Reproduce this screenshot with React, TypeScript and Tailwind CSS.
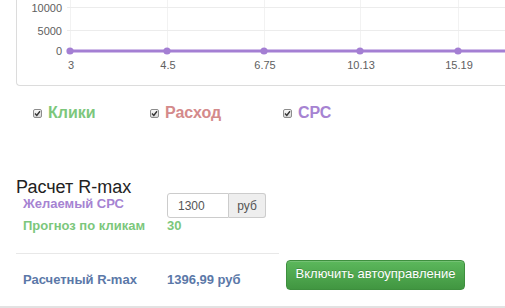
import type { ReactNode } from 'react';

const FONT = '[font-family:"Liberation_Sans",Arial,sans-serif]';

// x positions of the data points, relative to the chart svg
const POINTS = [
  { x: 53, label: '3' },
  { x: 150, label: '4.5' },
  { x: 247, label: '6.75' },
  { x: 343, label: '10.13' },
  { x: 441, label: '15.19' },
];

const Y_TICKS = [
  { y: 7.5, label: '10000' },
  { y: 30.5, label: '5000' },
  { y: 51, label: '0' },
];

function Chart() {
  return (
    <div className="ml-[16px] h-[86px] w-[520px] shrink-0 border-b border-l border-[#dcdcdc] rounded-bl-[4px]">
      <svg width="488" height="85" className="block" fontFamily="Liberation Sans, Arial, sans-serif">
        {POINTS.map((p) => (
          <line key={p.x} x1={p.x + 0.5} x2={p.x + 0.5} y1={0} y2={51} stroke="#f2f2f2" />
        ))}
        {Y_TICKS.slice(0, 2).map((t) => (
          <line key={t.y} x1={50} x2={488} y1={t.y} y2={t.y} stroke="#ececec" />
        ))}
        {Y_TICKS.map((t) => (
          <text key={t.label} x={45} y={t.y + 4} textAnchor="end" fontSize="11" fill="#606060">
            {t.label}
          </text>
        ))}
        <line x1={53} x2={488} y1={51} y2={51} stroke="#a47fd3" strokeWidth="3" />
        {POINTS.map((p) => (
          <circle key={p.label} cx={p.x} cy={51} r={3.6} fill="#a47fd3" />
        ))}
        {POINTS.map((p) => (
          <text key={p.label} x={p.x + 1} y={69} textAnchor="middle" fontSize="11" fill="#606060">
            {p.label}
          </text>
        ))}
      </svg>
    </div>
  );
}

function Check() {
  return (
    <span className="flex h-[9px] w-[9px] shrink-0 items-center justify-center rounded-[2px] border border-[#8c8c8c] bg-gradient-to-b from-[#fafafa] to-[#d8d8d8]">
      <svg width="7" height="7" viewBox="0 0 7 7">
        <path d="M1 3.6 L2.8 5.4 L6 1.3" fill="none" stroke="#333" strokeWidth="1.4" />
      </svg>
    </span>
  );
}

function Legend({ color, width, children }: { color: string; width: string; children: ReactNode }) {
  return (
    <div className={`flex items-center gap-[6px] ${width}`}>
      <Check />
      <span className={`text-[16px] font-bold leading-[20px] ${color}`}>{children}</span>
    </div>
  );
}

export default function App() {
  return (
    <div className={`relative flex h-[308px] w-[505px] flex-col overflow-hidden bg-white ${FONT}`}>
      <Chart />

      <div className="mt-[17px] flex pl-[33px]">
        <Legend color="text-[#7cc77c]" width="w-[117px]">Клики</Legend>
        <Legend color="text-[#d48a8b]" width="w-[133px]">Расход</Legend>
        <Legend color="text-[#a683d2]" width="">СРС</Legend>
      </div>

      <div className="mt-[58px] ml-[16px] h-[12px] text-[18px] leading-[12px] text-[#222]">Расчет R-max</div>

      <div className="flex pl-[23px]">
        <div className="w-[144px] pt-[3px] text-[13px] font-bold leading-[15px] text-[#a683d2]">Желаемый СРС</div>
        <div className="flex h-[25px]">
          <div className="flex w-[62px] items-center rounded-l-[3px] border border-[#cccccc] bg-white pl-[10px] text-[12px] text-[#555]">
            1300
          </div>
          <div className="flex w-[37px] items-center justify-center rounded-r-[3px] border border-l-0 border-[#cccccc] bg-[#eeeeee] text-[12px] text-[#555]">
            руб
          </div>
        </div>
      </div>

      <div className="flex pl-[23px] text-[13px] font-bold leading-[15px] text-[#7cc77c]">
        <div className="w-[144px]">Прогноз по кликам</div>
        <div>30</div>
      </div>

      <div className="mt-[20px] ml-[16px] w-[263px] border-t border-[#e8e8e8]" />

      <div className="flex pl-[23px] text-[13px] font-bold leading-[15px] text-[#5b78a8]">
        <div className="w-[144px] pt-[18px]">Расчетный R-max</div>
        <div className="w-[119px] pt-[18px]">1396,99 руб</div>
        <button className="mt-[6px] h-[30px] w-[179px] rounded-[4px] border border-[#3e8f3e] bg-gradient-to-b from-[#5cb85c] to-[#419641] pb-[3px] text-[13px] font-normal text-white shadow-[inset_0_1px_0_rgba(255,255,255,0.15)] [text-shadow:0_-1px_0_rgba(0,0,0,0.2)]">
          Включить автоуправление
        </button>
      </div>

      <div className="mt-auto h-[2px] w-full bg-[#e2e2e2]" />
    </div>
  );
}
